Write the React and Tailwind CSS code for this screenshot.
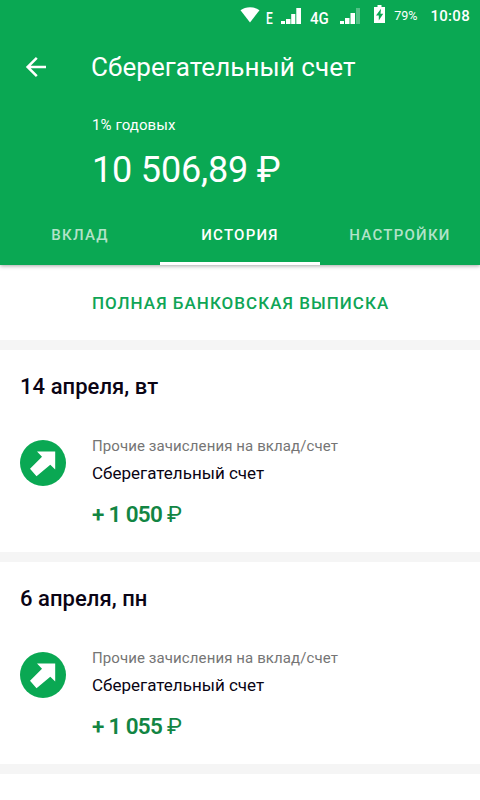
import React, { useState } from "react";

const TABS = ["Вклад", "История", "Настройки"];

const OPERATIONS = [
  {
    date: "14 апреля, вт",
    type: "Прочие зачисления на вклад/счет",
    account: "Сберегательный счет",
    amount: "+ 1 050",
  },
  {
    date: "6 апреля, пн",
    type: "Прочие зачисления на вклад/счет",
    account: "Сберегательный счет",
    amount: "+ 1 055",
  },
];

/* =========================
   STATUS BAR
   ========================= */
const StatusBar = () => (
  <div className="flex h-8 items-start justify-end pr-[10px] whitespace-nowrap">
    <svg className="mt-[7px] h-4 w-5" viewBox="0 0 20 16" fill="#fff">
      <path d="M10 15.5 0.5 3.3C3.2 1.2 6.4 0.2 10 0.2s6.8 1 9.5 3.1z" />
    </svg>
    <span className="mt-[11px] ml-[6px] w-[9px] text-[16px] leading-4 font-medium">
      <span className="inline-block origin-left scale-x-75">E</span>
    </span>
    <svg className="mt-2 ml-[6px] h-4 w-5" viewBox="0 0 20 16" fill="#fff">
      <path d="M0 13h4v3H0zM5 11h4.5v5H5zM10.200 6h4.1v10h-4.1zM15.300 0H20v16h-4.700z" />
    </svg>
    <span className="mt-[11px] ml-[9px] w-[19px] text-[16px] leading-4 font-medium">
      <span className="inline-block origin-left scale-x-[.94]">4G</span>
    </span>
    <svg className="mt-2 ml-[11px] h-4 w-5" viewBox="0 0 20 16" fill="#fff">
      <path d="M0 13h4v3H0zM5 10h4.5v6H5zM10.500 5H15v11h-4.500z" />
      <path d="M16 0h4v16h-4z" opacity="0.3" />
    </svg>
    <svg className="mt-[5px] ml-[14px] h-[18px] w-[11px]" viewBox="0 0 11 18">
      <path d="M3.500 0h4v2H11v16H0V2h3.500z" fill="#fff" />
      <path d="M7 3.800 2 10.500h2.800v5l4.400-6.700H6.500z" fill="#0aa853" />
    </svg>
    <span className="mt-2 ml-[9px] text-[12.5px] leading-4">79%</span>
    <span className="mt-2 ml-[13px] text-[15px] leading-4 font-medium">
      <span className="tracking-[0.3px]">10:08</span>
    </span>
  </div>
);

/* =========================
   HEADER
   ========================= */
const Header = ({ active, setActive }) => (
  <header className="relative z-10 h-[265px] shrink-0 bg-[#0aa853] text-white shadow-[0_1px_4px_rgba(0,0,0,0.35)]">
    <StatusBar />

    <div className="flex h-[70px] items-center pl-6">
      <button className="mr-[43px] size-6">
        <svg viewBox="0 0 24 24" className="size-6" fill="none" stroke="#fff">
          <path d="M22 12H3.500M12.800 2.800 3.600 12l9.200 9.200" strokeWidth="2.500" />
        </svg>
      </button>
      <h1 className="text-[26px] leading-8 tracking-[0.06px]">
        Сберегательный счет
      </h1>
    </div>

    <div className="h-[103px] pl-[92px] pt-[13px]">
      <p className="text-[15px] leading-5 tracking-[0.1px]">1% годовых</p>
      <p className="mt-[15px] text-[36px] leading-10 tracking-[-0.18px]">
        10 506,89 ₽
      </p>
    </div>

    <nav className="grid h-[60px] grid-cols-3">
      {TABS.map((tab, i) => (
        <button
          key={tab}
          onClick={() => setActive(i)}
          className={`border-b-3 pt-[3px] text-[15px] font-medium tracking-[1.25px] uppercase ${
            active === i ? "border-white" : "border-transparent text-white/70"
          }`}
        >
          {tab}
        </button>
      ))}
    </nav>
  </header>
);

const Operation = ({ item }) => (
  <section className="h-[202px] shrink-0 bg-white px-5 pt-[23px]">
    <h2 className="text-[22px] leading-7 font-medium tracking-[0.05px] text-[#0a0414]">
      {item.date}
    </h2>
    <div className="mt-[35px] flex">
      <svg className="mt-1 mr-[26px] size-[46px]" viewBox="0 0 46 46">
        <circle cx="23" cy="23" r="23" fill="#0aa853" />
        <path
          d="M17 11.500H35.200V29.500L30.300 24.800 16.500 36.300 10 28.800 22 16.700z"
          fill="#fff"
        />
      </svg>
      <div>
        <p className="text-[15px] leading-5 tracking-[0.1px] text-[#757575]">
          {item.type}
        </p>
        <p className="mt-[5px] text-[17px] leading-6 text-[#0a0414]">
          {item.account}
        </p>
        <p className="mt-[15px] text-[22.5px] leading-7 tracking-[-0.68px] text-[#128543]">
          <span className="font-semibold">{item.amount}</span> ₽
        </p>
      </div>
    </div>
  </section>
);

const App = () => {
  const [active, setActive] = useState(1);

  return (
    <div className="flex h-[800px] w-[480px] flex-col overflow-hidden bg-white font-[Roboto,sans-serif]">
      <Header active={active} setActive={setActive} />

      <button className="h-[75px] shrink-0 bg-white pt-[2px] pl-[92px] text-left text-[17px] font-medium tracking-[1.02px] text-[#0fa556] uppercase">
        Полная банковская выписка
      </button>

      {OPERATIONS.map((item) => (
        <React.Fragment key={item.date}>
          <div className="h-[10px] shrink-0 bg-[#f5f5f5]" />
          <Operation item={item} />
        </React.Fragment>
      ))}
      <div className="h-[10px] shrink-0 bg-[#f5f5f5]" />
    </div>
  );
};

export default App;
